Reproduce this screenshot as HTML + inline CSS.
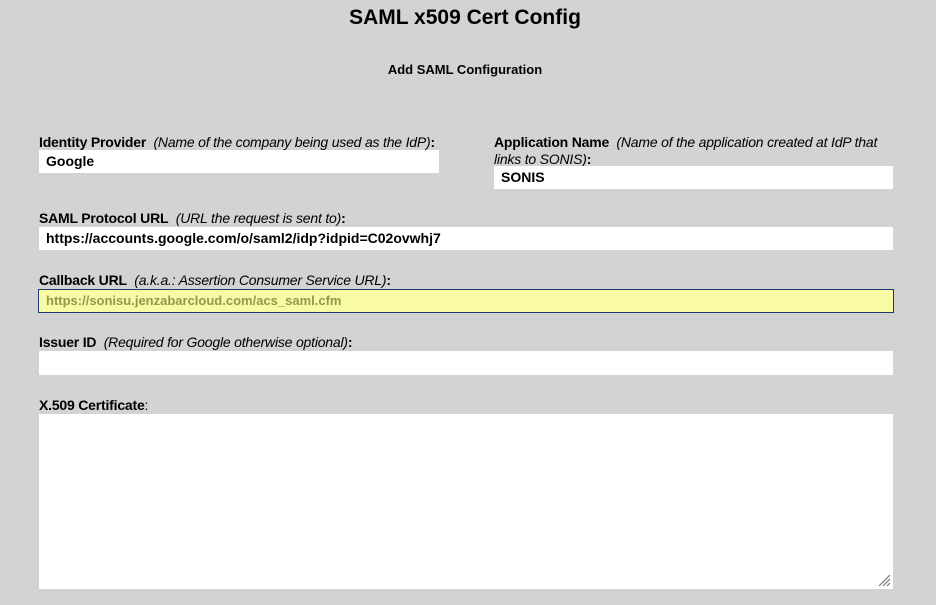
<!DOCTYPE html>
<html><head><style>
body{margin:0;width:936px;height:605px;background:#d3d3d3;font-family:"Liberation Sans",sans-serif;position:relative;overflow:hidden;color:#000}
.a{position:absolute}
.l{font-size:14px;font-weight:bold;letter-spacing:-0.2px}
.l i{font-weight:normal}
.in{background:#fff;font-size:14px;font-weight:bold;box-sizing:border-box;padding:3px 7px;line-height:16px}
</style></head><body>
<div class="a" style="left:0;width:930px;top:6px;text-align:center;font-size:21px;font-weight:bold">SAML x509 Cert Config</div>
<div class="a" style="left:0;width:930px;top:62px;text-align:center;font-size:13px;font-weight:bold">Add SAML Configuration</div>

<div class="a l" style="left:39px;top:134px">Identity Provider&nbsp; <i>(Name of the company being used as the IdP)</i>:</div>
<div class="a in" style="left:39px;top:150px;width:400px;height:23px">Google</div>

<div class="a l" style="left:494px;top:134px;width:400px;line-height:17px">Application Name&nbsp; <i>(Name of the application created at IdP that links to SONIS)</i>:</div>
<div class="a in" style="left:494px;top:166px;width:399px;height:23px">SONIS</div>

<div class="a l" style="left:39px;top:210px">SAML Protocol URL&nbsp; <i>(URL the request is sent to)</i>:</div>
<div class="a in" style="left:39px;top:227px;width:854px;height:23px">https://accounts.google.com/o/saml2/idp?idpid=C02ovwhj7</div>

<div class="a l" style="left:39px;top:272px">Callback URL&nbsp; <i>(a.k.a.: Assertion Consumer Service URL)</i>:</div>
<div class="a in" style="left:38px;top:289px;width:856px;height:24px;background:#f8fba4;border:1px solid #1f3a6e;color:#8f9a4a;font-size:13px;padding:3px 7px">https://sonisu.jenzabarcloud.com/acs_saml.cfm</div>

<div class="a l" style="left:39px;top:334px">Issuer ID&nbsp; <i>(Required for Google otherwise optional)</i>:</div>
<div class="a in" style="left:39px;top:351px;width:854px;height:24px"></div>

<div class="a l" style="left:39px;top:397px">X.509 Certificate<span style="font-weight:normal">:</span></div>
<div class="a in" style="left:39px;top:414px;width:854px;height:175px"></div>
<svg class="a" style="left:877px;top:573px" width="14" height="14"><path d="M2 13L13 2M6 13L13 6M10 13L13 10" stroke="#777" stroke-width="1.2"/></svg>
</body></html>
